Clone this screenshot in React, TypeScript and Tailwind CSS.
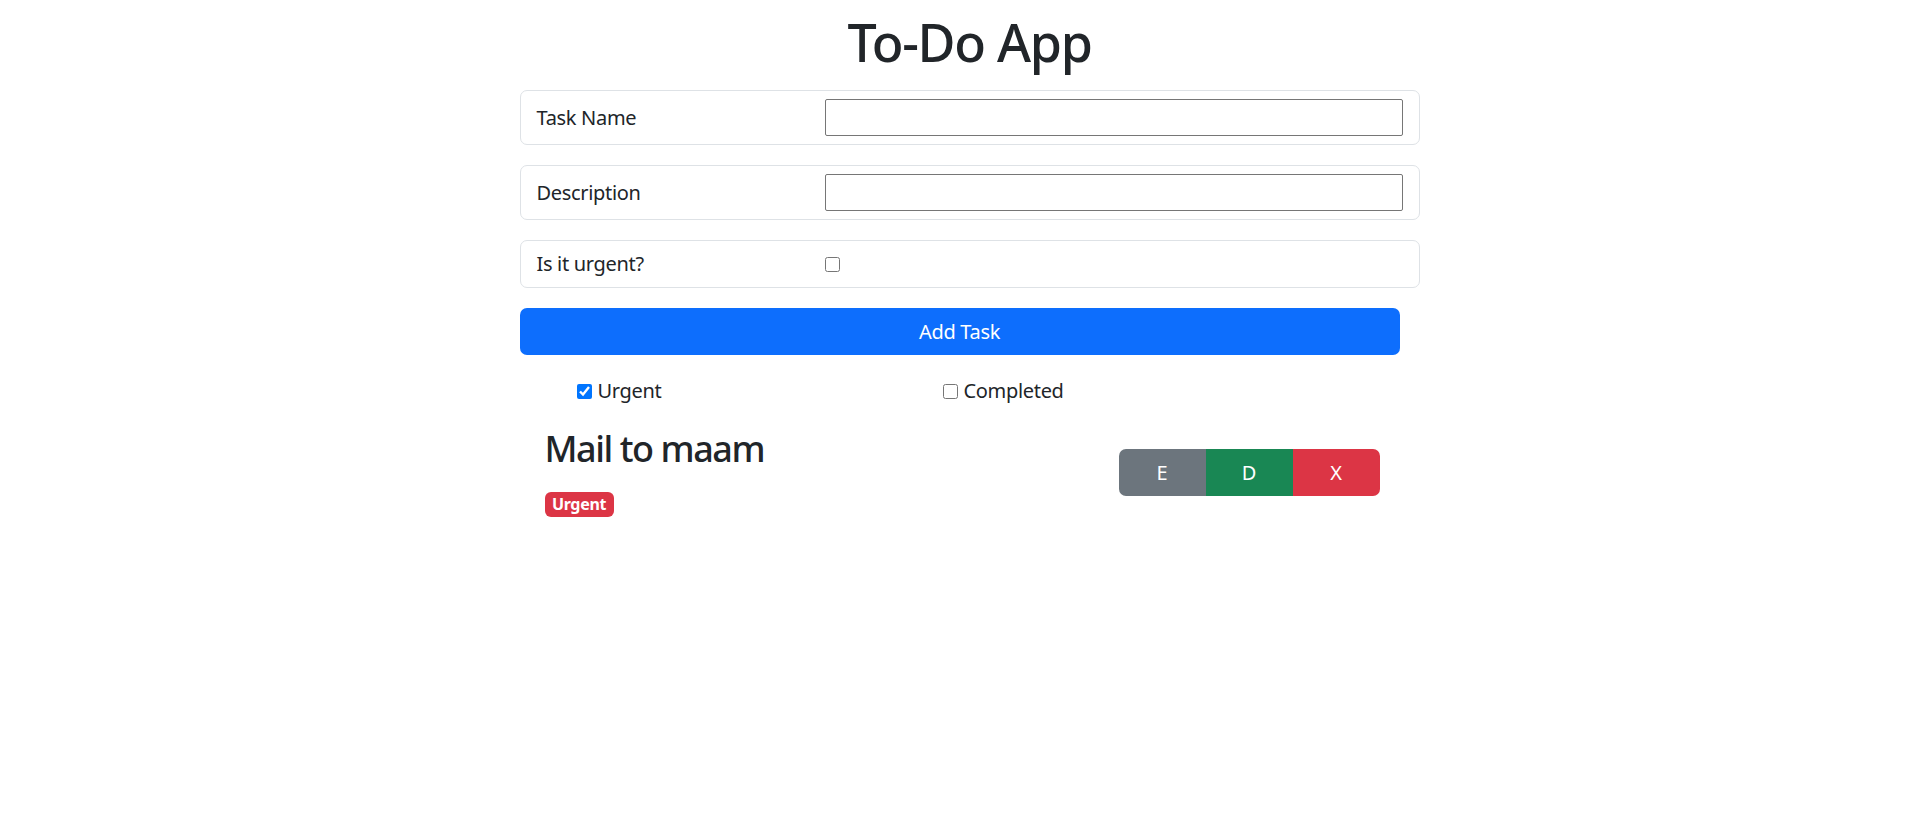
import { useState } from "react";

export default function App() {
  const [urgentFilter, setUrgentFilter] = useState(true);
  const [completedFilter, setCompletedFilter] = useState(false);

  return (
    <div className="min-h-screen bg-white text-[#212529] font-['Noto_Sans',sans-serif] tracking-[-0.02em]">
      <div className="flex justify-center pl-[19px]">
        <div className="w-[900px]">
          <h1 className="pt-[11px] mb-[17px] text-center text-[52px] font-medium leading-[1.2] tracking-[-0.025em]">
            To-Do App
          </h1>

          <div className="mb-[20px] flex h-[55px] items-center rounded-[7px] border border-[#dee2e6] px-4">
            <label className="w-[288px] text-[20px]">Task Name</label>
            <input type="text" className="h-[37px] w-[578px] rounded-[2px] border border-[#767676] px-2 text-[20px]" />
          </div>

          <div className="mb-[20px] flex h-[55px] items-center rounded-[7px] border border-[#dee2e6] px-4">
            <label className="w-[288px] text-[20px]">Description</label>
            <input type="text" className="h-[37px] w-[578px] rounded-[2px] border border-[#767676] px-2 text-[20px]" />
          </div>

          <div className="mb-[20px] flex h-[48px] items-center rounded-[7px] border border-[#dee2e6] px-4">
            <label className="w-[288px] text-[20px]">Is it urgent?</label>
            <input type="checkbox" className="h-[15px] w-[15px]" />
          </div>

          <button className="h-[47px] w-[880px] rounded-[7px] bg-[#0d6efd] text-[20px] text-white">
            Add Task
          </button>

          <div className="mt-[21px] flex h-[30px] items-center pl-[57px] text-[20px]">
            <label className="flex w-[366px] items-center gap-[6px]">
              <input
                type="checkbox"
                checked={urgentFilter}
                onChange={(e) => setUrgentFilter(e.target.checked)}
                className="h-[15px] w-[15px]"
              />
              Urgent
            </label>
            <label className="flex items-center gap-[6px]">
              <input
                type="checkbox"
                checked={completedFilter}
                onChange={(e) => setCompletedFilter(e.target.checked)}
                className="h-[15px] w-[15px]"
              />
              Completed
            </label>
          </div>

          <div className="mt-[21px] flex w-[880px] items-start justify-between pl-[25px] pr-[20px]">
            <div>
              <h2 className="text-[36px] font-medium leading-[1.2] tracking-[-0.04em]">Mail to maam</h2>
              <span className="mt-[21px] inline-flex h-[25px] w-[69px] items-center justify-center rounded-[6px] bg-[#dc3545] text-[16px] font-bold tracking-[-0.02em] text-white">
                Urgent
              </span>
            </div>
            <div className="mt-[22px] flex overflow-hidden rounded-[7px] text-[20px] text-white">
              <button className="h-[47px] w-[87px] bg-[#6c757d]">E</button>
              <button className="h-[47px] w-[87px] bg-[#198754]">D</button>
              <button className="h-[47px] w-[87px] bg-[#dc3545]">X</button>
            </div>
          </div>
        </div>
      </div>
    </div>
  );
}
